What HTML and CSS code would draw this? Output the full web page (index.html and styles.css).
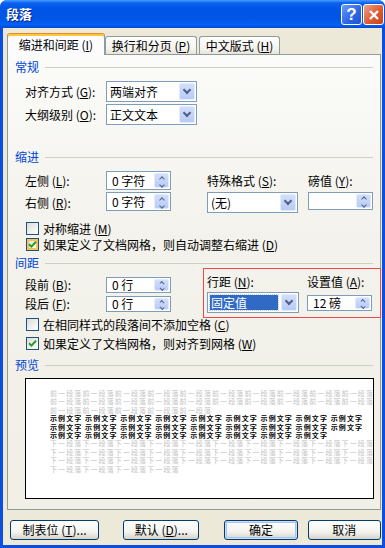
FILE: index.html
```html
<!DOCTYPE html>
<html lang="zh-CN">
  <head>
    <meta charset="UTF-8" />
    <meta name="viewport" content="width=device-width, initial-scale=1.0" />
    <title>段落</title>
    <link rel="stylesheet" href="styles.css">
  </head>
  <body>
    <div class="window">
      <!-- Title bar -->
      <div class="titlebar">
        <span class="title">段落</span>
        <div class="caption-buttons">
          <span class="cap-button help">?</span>
          <span class="cap-button close">
            <svg width="12" height="12" viewBox="0 0 12 12">
              <path d="M2 2 L10 10 M10 2 L2 10" stroke="#fff" stroke-width="2.4" />
            </svg>
          </span>
        </div>
      </div>

      <div class="dialog">
        <!-- Tabs -->
        <div class="tabs">
          <div class="tab active">缩进和间距 (<u>I</u>)</div>
          <div class="tab tab-second">换行和分页 (<u>P</u>)</div>
          <div class="tab tab-third">中文版式 (<u>H</u>)</div>
        </div>

        <div class="panel">
          <!-- General -->
          <div class="group-title">常规</div>
          <div class="general-grid">
            <span class="label">对齐方式 (<u>G</u>):</span>
            <div class="select">
              <span class="select-text">两端对齐</span>
              <span class="drop-button"><i class="chev-down"></i></span>
            </div>
            <span class="label">大纲级别 (<u>O</u>):</span>
            <div class="select">
              <span class="select-text">正文文本</span>
              <span class="drop-button"><i class="chev-down"></i></span>
            </div>
          </div>

          <!-- Indent -->
          <div class="group-title indent-title">缩进</div>
          <div class="indent-grid">
            <span class="label">左侧 (<u>L</u>):</span>
            <div class="spinner">
              <span class="spinner-text">0 字符</span>
              <span class="spin-button"><i class="chev-up small"></i><i class="chev-down small"></i></span>
            </div>
            <span class="label">特殊格式 (<u>S</u>):</span>
            <span class="label">磅值 (<u>Y</u>):</span>

            <span class="label">右侧 (<u>R</u>):</span>
            <div class="spinner">
              <span class="spinner-text">0 字符</span>
              <span class="spin-button"><i class="chev-up small"></i><i class="chev-down small"></i></span>
            </div>
            <div class="select special-select">
              <span class="select-text">(无)</span>
              <span class="drop-button"><i class="chev-down"></i></span>
            </div>
            <div class="spinner short-spinner">
              <span class="spinner-text"></span>
              <span class="spin-button"><i class="chev-up small"></i><i class="chev-down small"></i></span>
            </div>
          </div>

          <div class="check-list indent-checks">
            <div class="check-row">
              <span class="checkbox"></span>
              <span>对称缩进 (<u>M</u>)</span>
            </div>
            <div class="check-row">
              <span class="checkbox checked hover">
                <svg width="11" height="11" viewBox="0 0 11 11"><path d="M2 5.2 L4.4 7.6 L9 2.8" fill="none" stroke="#21A121" stroke-width="2" /></svg>
              </span>
              <span>如果定义了文档网格，则自动调整右缩进 (<u>D</u>)</span>
            </div>
          </div>

          <!-- Spacing -->
          <div class="group-title spacing-title">间距</div>
          <div class="spacing-row">
            <div class="spacing-left">
              <span class="label">段前 (<u>B</u>):</span>
              <div class="spinner thin-spinner">
                <span class="spinner-text">0 行</span>
                <span class="spin-button"><i class="chev-up small"></i><i class="chev-down small"></i></span>
              </div>
              <span class="label">段后 (<u>F</u>):</span>
              <div class="spinner thin-spinner">
                <span class="spinner-text">0 行</span>
                <span class="spin-button"><i class="chev-up small"></i><i class="chev-down small"></i></span>
              </div>
            </div>
            <div class="highlight-box">
              <span class="label">行距 (<u>N</u>):</span>
              <span class="label">设置值 (<u>A</u>):</span>
              <div class="select">
                <span class="select-text selected">固定值</span>
                <span class="drop-button"><i class="chev-down"></i></span>
              </div>
              <div class="spinner thin-spinner">
                <span class="spinner-text">12 磅</span>
                <span class="spin-button"><i class="chev-up small"></i><i class="chev-down small"></i></span>
              </div>
            </div>
          </div>

          <div class="check-list spacing-checks">
            <div class="check-row">
              <span class="checkbox"></span>
              <span>在相同样式的段落间不添加空格 (<u>C</u>)</span>
            </div>
            <div class="check-row">
              <span class="checkbox checked">
                <svg width="11" height="11" viewBox="0 0 11 11"><path d="M2 5.2 L4.4 7.6 L9 2.8" fill="none" stroke="#21A121" stroke-width="2" /></svg>
              </span>
              <span>如果定义了文档网格，则对齐到网格 (<u>W</u>)</span>
            </div>
          </div>

          <!-- Preview -->
          <div class="group-title preview-title">预览</div>
          <div class="preview">
            <div class="prev-line prev-gray">前一段落前一段落前一段落前一段落前一段落前一段落前一段落前一段落前一段落前一段落</div>
            <div class="prev-line prev-gray">前一段落前一段落前一段落前一段落前一段落前一段落前一段落前一段落前一段落前一段落</div>
            <div class="prev-line prev-gray">前一段落前一段落前一段落前一段落前一段落</div>
            <div class="prev-line prev-text">示例文字 示例文字 示例文字 示例文字 示例文字 示例文字 示例文字 示例文字 示例文字</div>
            <div class="prev-line prev-text">示例文字 示例文字 示例文字 示例文字 示例文字 示例文字 示例文字 示例文字 示例文字</div>
            <div class="prev-line prev-text">示例文字 示例文字 示例文字 示例文字 示例文字 示例文字 示例文字 示例文字</div>
            <div class="prev-line prev-gray">下一段落下一段落下一段落下一段落下一段落下一段落下一段落下一段落下一段落下一段落</div>
            <div class="prev-line prev-gray">下一段落下一段落下一段落下一段落下一段落下一段落下一段落下一段落下一段落下一段落</div>
            <div class="prev-line prev-gray">下一段落下一段落下一段落下一段落下一段落下一段落下一段落下一段落下一段落下一段落</div>
            <div class="prev-line prev-gray">下一段落下一段落下一段落下一段落</div>
          </div>
        </div>

        <!-- Dialog buttons -->
        <div class="button-row">
          <div class="btn btn-tabs">制表位 (<u>T</u>)...</div>
          <div class="btn btn-default">默认 (<u>D</u>)...</div>
          <div class="btn btn-ok">确定</div>
          <div class="btn btn-cancel">取消</div>
        </div>
      </div>
    </div>
  </body>
</html>
```

FILE: styles.css
```css
* {
  box-sizing: border-box;
}
body {
  margin: 0;
  font-family: "Noto Sans CJK SC", "Liberation Sans", sans-serif;
  font-size: 12px;
  line-height: 14px;
  color: #000;
  background: #fff;
}
u {
  text-decoration: underline;
}
.window {
  width: 385px;
  height: 548px;
  display: flex;
  flex-direction: column;
  background: #0b4fe0;
  border-radius: 7px 7px 0 0;
  overflow: hidden;
}
.titlebar {
  height: 28px;
  flex-shrink: 0;
  display: flex;
  align-items: center;
  justify-content: space-between;
  padding: 0 1px 0 6px;
  background: linear-gradient(
    to bottom,
    #4a9cff 0,
    #0a62f0 3px,
    #0056e6 8px,
    #0055e5 65%,
    #0460f2 88%,
    #0049d6 100%
  );
}
.title {
  color: #fff;
  font-weight: bold;
  font-size: 13px;
  text-shadow: 1px 1px 0 #0a1e8c;
}
.caption-buttons {
  display: flex;
  gap: 1px;
  margin-top: 1px;
}
.cap-button {
  width: 21px;
  height: 21px;
  border: 1px solid #fff;
  border-radius: 3px;
  display: flex;
  align-items: center;
  justify-content: center;
}
.help {
  background: linear-gradient(135deg, #6d9bf8, #2a63e4 60%, #1f55d8);
  color: #fff;
  font: bold 17px "Liberation Sans", sans-serif;
}
.close {
  background: linear-gradient(135deg, #eea189, #dd5b34 55%, #c8421c);
}
.dialog {
  flex: 1;
  margin: 0 3px 3px;
  background: #ece9d8;
  padding: 5px 1px 0 4px;
  display: flex;
  flex-direction: column;
}
.tabs {
  display: flex;
  align-items: flex-end;
  height: 21px;
  position: relative;
  z-index: 2;
}
.tab {
  height: 18px;
  border: 1px solid #919b9c;
  border-bottom: none;
  border-radius: 3px 3px 0 0;
  background: linear-gradient(#fefefe, #f4f3ee 70%, #e7e4d8);
  display: flex;
  align-items: center;
  justify-content: center;
  padding-top: 1px;
}
.tab.active {
  width: 98px;
  height: 22px;
  margin-bottom: -1px;
  background: #fcfcfe;
  border-top: 1px solid #e68b2c;
  box-shadow: inset 0 2px 0 #ffc83c;
}
.tab-second {
  width: 92px;
  margin-left: 0;
}
.tab-third {
  width: 81px;
  margin-left: 2px;
}
.panel {
  width: 374px;
  height: 456px;
  flex-shrink: 0;
  border: 1px solid #919b9c;
  background: linear-gradient(#fbfbf9, #f3f2ec 40%, #f1efe6);
  padding: 5px 7px 0;
}
.group-title {
  display: flex;
  align-items: center;
  height: 14px;
  color: #0046d5;
}
.group-title::after {
  content: "";
  flex: 1;
  height: 1px;
  margin-left: 6px;
  background: #d0d0bf;
}
.label {
  display: flex;
  align-items: center;
  white-space: nowrap;
}
.general-grid {
  display: grid;
  grid-template-columns: 81px 91px;
  grid-auto-rows: 21px;
  row-gap: 2px;
  margin: 7px 0 0 10px;
}
.indent-title {
  margin-top: 25px;
}
.indent-grid {
  display: grid;
  grid-template-columns: 81px 101px 101px 65px;
  grid-template-rows: 19px 21px;
  row-gap: 2px;
  margin: 7px 0 0 10px;
}
.select {
  height: 21px;
  border: 1px solid #7f9db9;
  background: #fff;
  display: flex;
  align-items: stretch;
}
.special-select {
  width: 91px;
}
.select-text {
  flex: 1;
  display: flex;
  align-items: center;
  padding-left: 3px;
  white-space: nowrap;
}
.select-text.selected {
  margin: 2px;
  padding-left: 1px;
  background: #316ac5;
  color: #fff;
  outline: 1px dotted #b8c8e8;
}
.drop-button {
  width: 16px;
  margin: 1px;
  border: 1px solid #e2eafd;
  border-radius: 2px;
  background: linear-gradient(#d2defc, #b8cbf7);
  display: flex;
  align-items: center;
  justify-content: center;
}
.chev-down,
.chev-up {
  display: block;
  width: 6px;
  height: 6px;
  border: solid #4d6185;
  border-width: 0 2px 2px 0;
}
.chev-down {
  transform: rotate(45deg);
  margin-top: -3px;
}
.chev-up {
  transform: rotate(-135deg);
  margin-top: 2px;
}
.chev-down.small,
.chev-up.small {
  width: 4px;
  height: 4px;
  border-width: 0 1.5px 1.5px 0;
}
.chev-down.small {
  margin-top: 0;
}
.spinner {
  width: 65px;
  height: 19px;
  border: 1px solid #7f9db9;
  background: #fff;
  display: flex;
  align-items: stretch;
}
.thin-spinner {
  height: 16px;
}
.short-spinner {
  height: 18px;
}
.spinner-text {
  flex: 1;
  display: flex;
  align-items: center;
  padding-left: 5px;
  white-space: nowrap;
}
.spin-button {
  width: 15px;
  margin: 1px;
  border: 1px solid #e2eafd;
  border-radius: 2px;
  background: linear-gradient(#d2defc, #b8cbf7);
  display: flex;
  flex-direction: column;
  align-items: center;
  justify-content: center;
  gap: 2px;
}
.check-list {
  display: flex;
  flex-direction: column;
  margin-left: 11px;
}
.indent-checks {
  margin-top: 9px;
  gap: 3px;
}
.spacing-checks {
  margin-top: 0;
  gap: 6px;
}
.check-row {
  display: flex;
  align-items: center;
  height: 13px;
  gap: 4px;
  white-space: nowrap;
}
.checkbox {
  width: 13px;
  height: 13px;
  flex-shrink: 0;
  border: 1px solid #1c5180;
  background: linear-gradient(135deg, #dcdcd7, #fff);
  display: flex;
  align-items: center;
  justify-content: center;
}
.checkbox.hover {
  box-shadow: inset 0 0 0 2px #f8c25a;
}
.spacing-title {
  margin-top: 5px;
}
.spacing-row {
  display: flex;
  margin-top: -2px;
}
.spacing-left {
  display: grid;
  grid-template-columns: 81px 65px;
  grid-auto-rows: 16px;
  row-gap: 3px;
  margin-left: 10px;
  padding-top: 9px;
}
.highlight-box {
  width: 178px;
  height: 50px;
  flex-shrink: 0;
  margin-left: 32px;
  border: 1.5px solid #ec4a4a;
  display: grid;
  grid-template-columns: 100px 65px;
  grid-template-rows: 14px 21px;
  row-gap: 3px;
  align-items: center;
  padding: 6px 0 0 3px;
}
.highlight-box .select {
  width: 92px;
}
.preview-title {
  margin-top: 8px;
}
.preview {
  width: 349px;
  height: 121px;
  margin: 6px 0 0 10px;
  border: 1px solid #000;
  background: #fff;
  padding: 10px 0 0 24px;
  font-size: 7px;
  line-height: 8.4px;
  letter-spacing: 1.1px;
}
.prev-line {
  height: 8.4px;
  white-space: nowrap;
}
.prev-gray {
  color: #c4c4c4;
}
.prev-text {
  color: #000;
  font-weight: bold;
}
.button-row {
  display: flex;
  margin-top: 10px;
}
.btn {
  height: 20px;
  border: 1px solid #003c74;
  border-radius: 3px;
  background: linear-gradient(#ffffff, #f3f3ef 60%, #d8d3c8);
  display: flex;
  align-items: center;
  justify-content: center;
  white-space: nowrap;
}
.btn-tabs {
  width: 90px;
  margin-left: 3px;
}
.btn-default {
  width: 77px;
  margin-left: 24px;
}
.btn-ok {
  width: 74px;
  margin-left: 25px;
  box-shadow: inset 0 0 0 1px #cedcf7, inset 0 0 0 2px #a9c3ef;
}
.btn-cancel {
  width: 74px;
  margin-left: 10px;
}
```
